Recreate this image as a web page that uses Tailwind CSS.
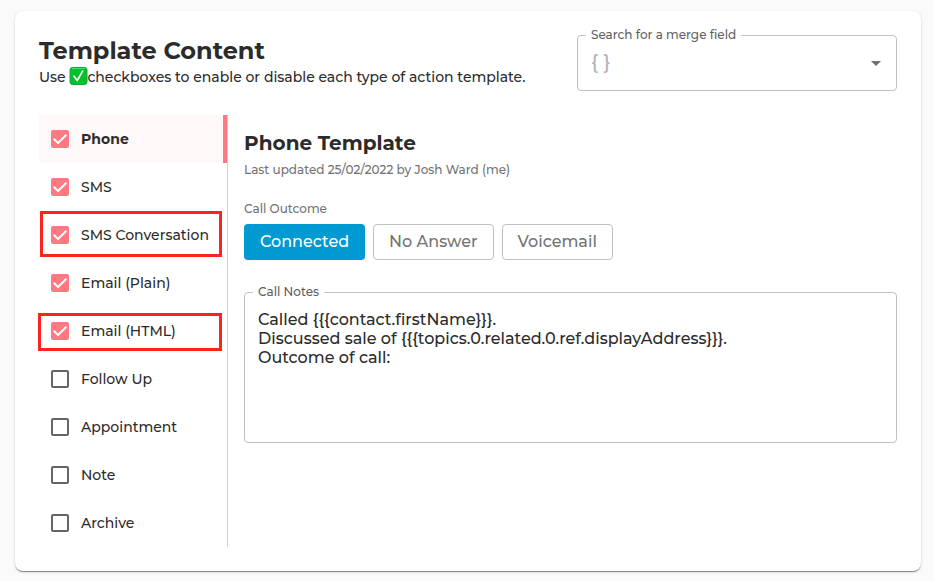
<!DOCTYPE html>
<html lang="en">
<head>
  <meta charset="UTF-8" />
  <meta name="viewport" content="width=device-width, initial-scale=1.0" />
  <title>Template Content</title>
  <script src="https://cdn.jsdelivr.net/npm/@tailwindcss/browser@4"></script>
</head>
<body class="bg-[#fafafa] min-h-screen pt-[11px] pr-[13px] pb-[10px] pl-[15px] font-['Montserrat','Inter',sans-serif] font-medium text-[#2b2b2b]">

  <main class="bg-white rounded-lg p-6 shadow-[0_2px_1px_-1px_rgba(0,0,0,0.3),0_1px_1px_rgba(0,0,0,0.18),0_1px_3px_rgba(0,0,0,0.14)]">

    <!-- Header -->
    <header class="flex justify-between gap-6">
      <div>
        <h1 class="text-2xl leading-8 font-bold">Template Content</h1>
        <p class="flex text-sm leading-5">
          <span>Use&nbsp;</span>
          <svg class="w-[18px] h-[18px] overflow-visible" viewBox="0 0 18 18" fill="none" aria-hidden="true">
            <rect x="1" y="0.5" width="17" height="17" rx="2.5" fill="#00c32c" stroke="#12a838" />
            <path d="M3 1.5h13" stroke="#4fdc72" />
            <path d="M5 9.2L8.2 13.6L13.6 4.2" stroke="#fff" stroke-width="1.7" stroke-linecap="round" stroke-linejoin="round" />
          </svg>
          <span>checkboxes to enable or disable each type of action template.</span>
        </p>
      </div>
      <div class="relative w-80 h-14 shrink-0">
        <label for="merge-field" class="absolute -top-2 left-[9px] px-[5px] bg-white text-xs leading-4 text-[#5f5f5f]">Search for a merge field</label>
        <select id="merge-field" class="w-full h-full appearance-none rounded border border-[#c0c0c0] px-[13px] pb-0.5 text-xl text-[#b5b5b5]">
          <option>{&nbsp;}</option>
        </select>
        <svg class="absolute right-4 top-[26px] w-2.5 h-[5px] pointer-events-none" viewBox="0 0 10 5" fill="#707070" aria-hidden="true"><path d="M0 0l5 5 5-5z" /></svg>
      </div>
    </header>

    <div class="flex mt-6">
      <!-- Template types -->
      <ul class="w-[189px] shrink-0 border-r border-[#cfcfcf] text-sm leading-5">
        <li class="h-12 flex bg-[#fff8f8] border-r-4 border-[#ff7882]">
          <label class="flex flex-1 items-center gap-3 pl-3 font-bold">
            <span class="grid">
              <input type="checkbox" checked class="peer col-start-1 row-start-1 size-[18px] appearance-none rounded-xs border-2 border-[#666] checked:border-[#ff7882] checked:bg-[#ff7882]" />
              <svg class="col-start-1 row-start-1 size-[18px] hidden peer-checked:block pointer-events-none" viewBox="0 0 18 18" fill="none"><path d="M2.7 8.7L7 13L15.3 4.7" stroke="#fff" stroke-width="2" /></svg>
            </span>
            Phone
          </label>
        </li>
        <li class="h-12 flex">
          <label class="flex flex-1 items-center gap-3 pl-3">
            <span class="grid">
              <input type="checkbox" checked class="peer col-start-1 row-start-1 size-[18px] appearance-none rounded-xs border-2 border-[#666] checked:border-[#ff7882] checked:bg-[#ff7882]" />
              <svg class="col-start-1 row-start-1 size-[18px] hidden peer-checked:block pointer-events-none" viewBox="0 0 18 18" fill="none"><path d="M2.7 8.7L7 13L15.3 4.7" stroke="#fff" stroke-width="2" /></svg>
            </span>
            SMS
          </label>
        </li>
        <li class="h-12 flex relative">
          <label class="flex flex-1 items-center gap-3 pl-3">
            <span class="grid">
              <input type="checkbox" checked class="peer col-start-1 row-start-1 size-[18px] appearance-none rounded-xs border-2 border-[#666] checked:border-[#ff7882] checked:bg-[#ff7882]" />
              <svg class="col-start-1 row-start-1 size-[18px] hidden peer-checked:block pointer-events-none" viewBox="0 0 18 18" fill="none"><path d="M2.7 8.7L7 13L15.3 4.7" stroke="#fff" stroke-width="2" /></svg>
            </span>
            SMS Conversation
          </label>
          <!-- Highlight -->
          <div class="absolute left-px right-[5px] top-0 bottom-0.5 border-3 border-[#fd241d] pointer-events-none"></div>
        </li>
        <li class="h-12 flex">
          <label class="flex flex-1 items-center gap-3 pl-3">
            <span class="grid">
              <input type="checkbox" checked class="peer col-start-1 row-start-1 size-[18px] appearance-none rounded-xs border-2 border-[#666] checked:border-[#ff7882] checked:bg-[#ff7882]" />
              <svg class="col-start-1 row-start-1 size-[18px] hidden peer-checked:block pointer-events-none" viewBox="0 0 18 18" fill="none"><path d="M2.7 8.7L7 13L15.3 4.7" stroke="#fff" stroke-width="2" /></svg>
            </span>
            Email (Plain)
          </label>
        </li>
        <li class="h-12 flex relative">
          <label class="flex flex-1 items-center gap-3 pl-3">
            <span class="grid">
              <input type="checkbox" checked class="peer col-start-1 row-start-1 size-[18px] appearance-none rounded-xs border-2 border-[#666] checked:border-[#ff7882] checked:bg-[#ff7882]" />
              <svg class="col-start-1 row-start-1 size-[18px] hidden peer-checked:block pointer-events-none" viewBox="0 0 18 18" fill="none"><path d="M2.7 8.7L7 13L15.3 4.7" stroke="#fff" stroke-width="2" /></svg>
            </span>
            Email (HTML)
          </label>
          <!-- Highlight -->
          <div class="absolute -left-px right-[5px] top-1.5 bottom-1 border-3 border-[#fd241d] pointer-events-none"></div>
        </li>
        <li class="h-12 flex">
          <label class="flex flex-1 items-center gap-3 pl-3">
            <input type="checkbox" class="size-[18px] appearance-none rounded-xs border-2 border-[#666] checked:border-[#ff7882] checked:bg-[#ff7882]" />
            Follow Up
          </label>
        </li>
        <li class="h-12 flex">
          <label class="flex flex-1 items-center gap-3 pl-3">
            <input type="checkbox" class="size-[18px] appearance-none rounded-xs border-2 border-[#666] checked:border-[#ff7882] checked:bg-[#ff7882]" />
            Appointment
          </label>
        </li>
        <li class="h-12 flex">
          <label class="flex flex-1 items-center gap-3 pl-3">
            <input type="checkbox" class="size-[18px] appearance-none rounded-xs border-2 border-[#666] checked:border-[#ff7882] checked:bg-[#ff7882]" />
            Note
          </label>
        </li>
        <li class="h-12 flex">
          <label class="flex flex-1 items-center gap-3 pl-3">
            <input type="checkbox" class="size-[18px] appearance-none rounded-xs border-2 border-[#666] checked:border-[#ff7882] checked:bg-[#ff7882]" />
            Archive
          </label>
        </li>
      </ul>

      <!-- Selected template -->
      <section class="flex-1 min-w-0 pl-4 pt-4">
        <h2 class="text-xl leading-6 font-bold">Phone Template</h2>
        <p class="mt-[5px] text-xs leading-5 text-[#737373]">Last updated 25/02/2022 by Josh Ward (me)</p>

        <h3 id="outcome" class="mt-[19px] text-xs leading-5 text-[#737373]">Call Outcome</h3>
        <div role="group" aria-labelledby="outcome" class="flex gap-2 mt-[5px] text-base leading-5">
          <button type="button" class="h-9 px-4 rounded bg-[#0099d1] text-white">Connected</button>
          <button type="button" class="h-9 px-[15px] rounded border border-[#c0c0c0] text-[#737373]">No Answer</button>
          <button type="button" class="h-9 px-[15px] rounded border border-[#c0c0c0] text-[#737373]">Voicemail</button>
        </div>

        <div class="relative mt-8">
          <label for="call-notes" class="absolute -top-2 left-[9px] px-[5px] bg-white text-xs leading-4 text-[#5f5f5f]">Call Notes</label>
          <textarea id="call-notes" class="block w-full h-[151px] resize-none rounded border border-[#c0c0c0] px-[13px] py-[17px] text-base leading-[19px]">Called {{{contact.firstName}}}.
Discussed sale of {{{topics.0.related.0.ref.displayAddress}}}.
Outcome of call:</textarea>
        </div>
      </section>
    </div>
  </main>

</body>
</html>
